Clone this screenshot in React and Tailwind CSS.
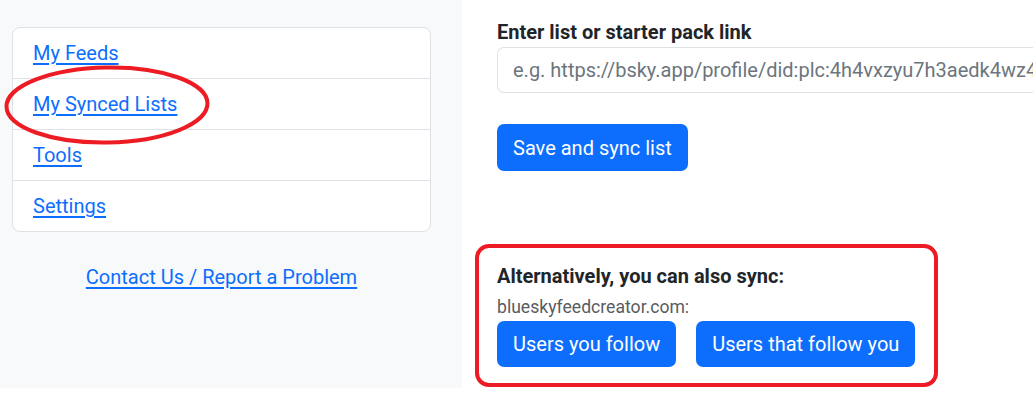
import React from "react";

export default function App() {
  const font = { fontFamily: "Roboto, 'Liberation Sans', sans-serif" };
  const items = ["My Feeds", "My Synced Lists", "Tools", "Settings"];
  return (
    <div className="w-[1033px] h-[403px] overflow-hidden bg-white flex items-start text-[20px] text-[#212529]" style={font}>
      <div className="w-[462px] h-[388px] shrink-0 bg-[#f8f9fa] pt-[27px] pl-[12px] pr-[31px] relative">
        <div className="bg-white border border-[#dee2e6] rounded-[8px]">
          {items.map((t, i) => (
            <div
              key={t}
              className={`px-[20px] py-[10px] leading-[30px] ${i < items.length - 1 ? "border-b border-[#dee2e6]" : ""}`}
            >
              <a href="#" className="text-[#0d6efd] underline underline-offset-[3px]">{t}</a>
            </div>
          ))}
        </div>
        <div className="mt-[30px] text-center leading-[30px]">
          <a href="#" className="text-[#0d6efd] underline underline-offset-[3px]">Contact Us / Report a Problem</a>
        </div>
        <svg className="absolute left-[3px] top-[64px] pointer-events-none" width="208" height="84" viewBox="0 0 208 84">
          <ellipse cx="104" cy="41" rx="100.5" ry="37.5" fill="none" stroke="#ed1c24" strokeWidth="4" transform="rotate(-1 104 41)" />
        </svg>
      </div>
      <div className="flex-1 pl-[13px] pt-[17px]">
        <div className="pl-[22px]">
          <div className="font-bold leading-[30px]">Enter list or starter pack link</div>
          <div className="w-[536px] h-[46px] border border-[#dee2e6] border-r-0 rounded-l-[7px] pl-[15px] flex items-center text-[#6c757d] whitespace-nowrap overflow-hidden">
            e.g. https://bsky.app/profile/did:plc:4h4vxzyu7h3aedk4wz4pm7b4/lists/3l2ux3obzzi2f
          </div>
          <button className="mt-[31px] h-[47px] px-[16px] rounded-[7px] bg-[#0d6efd] text-white leading-[30px]">
            Save and sync list
          </button>
        </div>
        <div className="mt-[73px] w-[463px] h-[143px] border-4 border-[#ed1c24] rounded-[14px] pl-[18px] pt-[13px]">
          <div className="font-bold leading-[30px]">Alternatively, you can also sync:</div>
          <div className="text-[17.6px] leading-[27px] mt-[3px] text-[#595c5f]">blueskyfeedcreator.com:</div>
          <div className="flex gap-[20px]">
            <button className="h-[46px] px-[16px] rounded-[7px] bg-[#0d6efd] text-white leading-[30px]">Users you follow</button>
            <button className="h-[46px] px-[16px] rounded-[7px] bg-[#0d6efd] text-white leading-[30px]">Users that follow you</button>
          </div>
        </div>
      </div>
    </div>
  );
}
